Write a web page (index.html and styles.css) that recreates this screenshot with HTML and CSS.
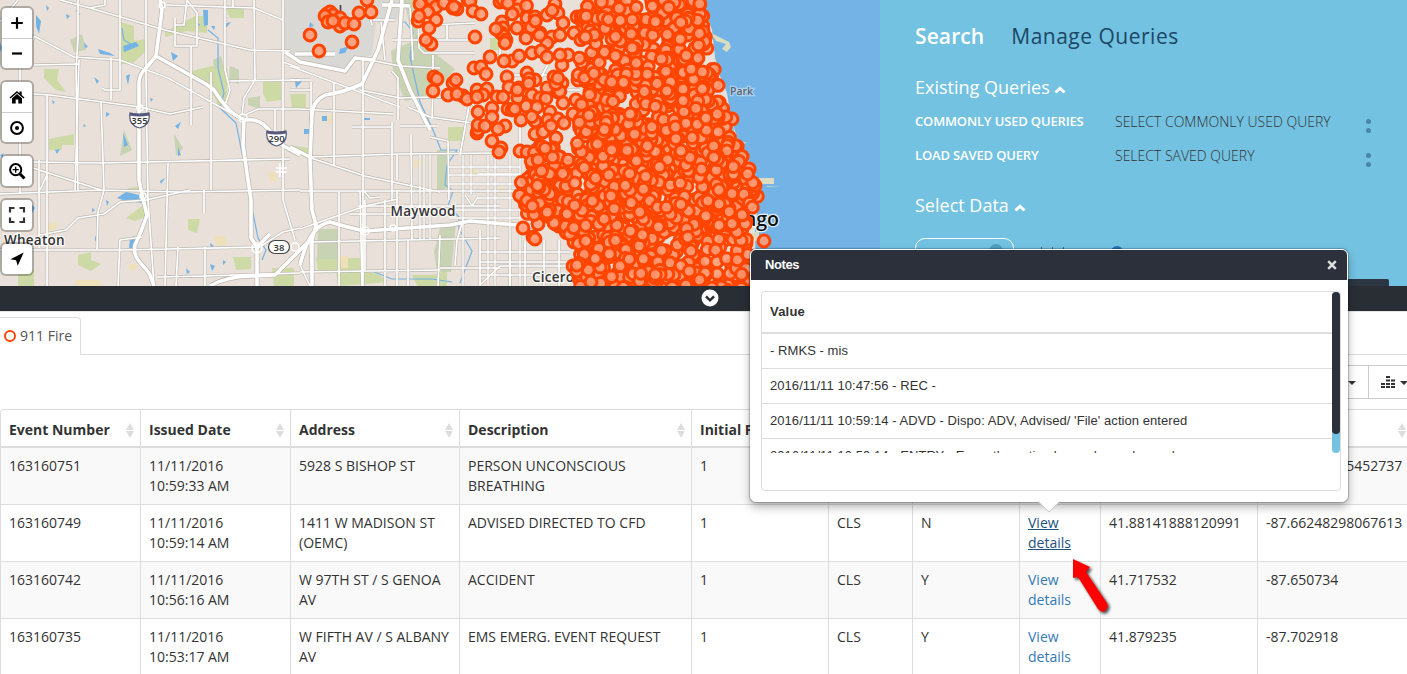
FILE: index.html
```html
<!DOCTYPE html>
<html lang="en">
<head>
<meta charset="utf-8">
<title>911 Fire</title>
<link rel="stylesheet" href="styles.css">
</head>
<body>
<div class="app">
  <div class="top">
    <div class="map">
      <svg class="map-canvas" width="880" height="286" viewBox="0 0 880 286">
        <rect class="land" width="880" height="286"/>
        <path class="airport" d="M283 0H405L395 22 376 22 372 55 356 60 350 70 330 68 292 58 283 50Z"/>
        <g class="park">
          <path d="M121 22l13 4v15l12-2v12l-14 13h-11zM44 69h15l-2 11 9 12-10-2-12-12zM165 32l30-16h12v17l-20-2-22 6zM188 72l24-6 15 2v34l-8 5-12-25zM263 82h18v18l-14 2-4-8zM49 139l25-5v11h-12v5h-13zM126 218l16-12 5 10-12 5zM78 255l13-3v8l10 4-10 7-13-6zM188 219h12l-3 14-9-3zM233 257h18v12l-15 1zM290 94h16v14h-14zM448 127h17v14h-17zM290 145l18 3 3 10-21-6zM18 270h16v16H18zM272 268h22v18h-20zM316 258h44v12h-42zM336 272l20-3 22 5 10 8-50 4zM412 275h20l15-4v15h-30zM120 190l20-4 3 5-20 2zM226 8h18v10h-14zM490 38h16v12h-16z"/>
          <path class="wood" d="M404 0h13v35l20 20 18 14-20 24-30 8-12-30-2-20 22-10zM437 150h12l-2 38-10 4zM440 228l16-6-5 50h-14l-3-20zM318 229h20v30h-21zM70 40l12-6 4 16-12 2zM213 60l8-4 3 12-10 1zM230 66l9 4v14l-10-4zM248 98l12-2v13l-12-4zM124 130l8 20-12 6zM174 134l9 14-7 8z"/>
        </g>
        <path class="sand" d="M46 224l12-2-3 8h-7zM214 236h12v9h-10zM75 280h25v6H75zM269 172h7v10l-7-1zM327 115h7v8h-7zM414 160h9v7h-9zM469 169h7v7h-7zM499 187h5v6h-5zM340 256h8v12h-7zM129 264h7v6h-6z"/>
        <g class="water">
          <path d="M36 15l5 6-2 13-3-8zM98 49l12 4 5 3-15-2zM123 46l13-4 3 4-15 6zM203 10h5v15l-4 1zM211 26h4l-1 4zM171 52l7 4-5 5zM84 42l4 5-3 1zM94 77l5 4-2 3zM123 133l5 12-4 2zM175 126l6-4-3 7zM178 147l3 8-3 1zM130 238l5-2v12h-6zM55 150l5-1-3 5zM160 181l5-3-4 6zM322 116h5v5h-5zM304 129h6v5h-6zM295 82l8-2-7 8zM364 118h6v2h-6zM340 49l9-3-4 7-6 1zM310 22l4 4-5 1zM32 205l3 3-3 5zM117 198l9-6 18 4-3 7-18-3zM106 200l3 2-2 4zM0 42l2 6-2 4zM46 5l3 3-2 3zM66 14l4 2-3 3zM52 100l3 2-2 2zM150 98l3 1-2 3zM196 20l4 5-3 2zM224 24l7-2-5 6zM126 76l4-2-2 11zM210 243l4 3-3 2zM223 260l3 2-3 3zM210 264l5 2-3 5zM186 268l4 4-3 2zM95 236l4 3-4 2zM92 208l3 2-3 2zM106 112l4 2-4 3zM84 124l2 2-3 1zM0 155l4-2-2 5z"/>
          <path class="lake" d="M702 0L712 30 716 66 727 93 731 118 733 135 748 160 760 185 755 230 756 286H880V0Z"/>
        </g>
        <path class="beach" d="M711 33l18 9 2 5-4 5-5-3 4-5-10-3zM714 56l5 12-3-1zM733 124l5 16 9 3-5 1-7-4zM758 178h16v6h-16zM766 186l14 1h-12zM749 235l10-5v10l-8 2z"/>
        <path class="river" d="M400 22l5 0 8 10-3 25 10 45 13 28 8 20 16 0-10 15-2 20 8 6-5 15 11 11 0 12 13 22-6 16-6 16M208 30l10 8 0 30 6 25-4 15 16 15 8 40 8 45 6 30 8 12-4 10M122 28l2 12 10 6M76 10l4 5M372 271l20 8 40 0 20 3"/>
        <defs>
          <g id="minor">
            <path d="M60 0L90 8 105 5V0M90 8L165 30 250 50 290 51M120 0V90L105 90 102 88M47 95V286M78 0V38L76 70 78 190M75 190L79 60M101 101L104 190 98 212 97 249M111 58V100M146 0V76L148 200 154 286M33 40L34 36 74 57 120 60 168 78 240 118M34 65L78 64M33 94L50 95 140 107 170 114 203 107M33 162L100 163 290 159M0 194L100 190 180 192 300 190M0 250L120 250 258 247M33 168L101 190M40 235L66 230 78 218 104 214 120 202 146 200 190 190M168 163L165 286M178 247L176 286M118 286L120 240 142 237M175 18V46H197V13M197 13L187 0M187 0L184 25 175 25M191 46V125M211 72V190M204 190V213M225 0V70L230 90 225 105M254 0L255 80 244 98 242 115M283 0V200L295 240M230 81L300 80M283 62L300 68M167 5L254 8 283 20M233 0V8M205 286V247M157 277L205 276 300 273M255 250L283 232 300 228M39 248V160M47 175L40 190M20 65V194M0 22L18 0M245 115L258 109 300 109M275 109V135"/>
            <path d="M290 80H311M290 90H311M311 82V156M290 66L400 107M363 58V286M334 83V166M392 122V200M300 109L393 114M352 127H392M400 126H437M392 71L398 78V120M360 90L400 98 430 97 467 98 480 112M433 84L432 119M408 107L430 117 480 124M430 137L448 141 449 200M311 158L365 176 440 192M310 157L400 154 500 153M300 191H520M364 191L370 198 380 197M300 229L365 206 398 199M358 206L500 206M350 214H440M411 135L412 240M397 155V180M397 190V286M365 200V270M385 200V286M408 240V286M339 192V286M311 242L500 238M300 272L440 270M440 268L500 268M440 235L438 286M465 195L472 206 478 197M463 220L457 240 455 265M480 230V286M510 240V286M525 240V286M544 240V286M559 240V286M480 252H570M480 262H570M480 275H575M480 285L500 266H575M418 10L419 48 424 53 475 53M392 40L475 40M433 55V70M447 25V40M430 25L475 23M410 8L413 60M373 20H395M381 22L385 60M360 58L400 66 440 68M460 155L470 100M360 191L362 286M312 280L310 240M300 265L310 286M366 0L372 25M500 45V60M550 60L540 80M500 75H560M520 120V160M540 90H580M590 150H640M600 60V110M650 40V90M670 120H720"/>
          </g>
          <g id="street">
            <path d="M420 155V240M424 155V240M430 155V240M463 155V286M471 155V195M488 155V286M495 155V286M510 155V286M520 155V286M449 167H520M449 175H520M449 184H540M478 174H520M478 198H520M449 210H540M449 218H520"/>
          </g>
          <g id="major">
            <path d="M160 0L162 10 156 56M156 56L146 68Q139 74 139 84V180L142 195 147 215Q140 235 135 245C132 260 145 265 150 275L154 286M156 56L206 84 214 90Q230 116 246 120Q262 118 272 134L282 145 300 155"/>
            <path d="M244 118L243 145 248 180 251 200V238L257 247M257 247L270 234M210 286Q225 277 250 276L275 275 292 258 310 240M257 245V286M392 0L378 50 362 84Q345 92 325 95Q312 102 312 115L310 160 312 210 316 225 312 240 312 286M300 265Q310 225 330 222Q350 228 365 231L450 225 470 221 540 227M285 52L300 62 345 71 355 58 372 60M290 147L310 157M295 54H335M402 0L398 60 410 90 430 130M382 5L392 5 410 6"/>
          </g>
        </defs>
        <use href="#street" class="casing street-casing"/>
        <use href="#minor" class="casing minor-casing"/>
        <use href="#major" class="casing major-casing"/>
        <use href="#street" class="road street-road"/>
        <use href="#minor" class="road minor-road"/>
        <use href="#major" class="road major-road"/>
        <g class="interchange"><circle cx="162" cy="5" r="3"/><circle cx="243" cy="118" r="4"/><circle cx="257" cy="248" r="5"/><circle cx="295" cy="247" r="4"/><circle cx="365" cy="231" r="4"/><circle cx="393" cy="228" r="3"/><circle cx="143" cy="196" r="3"/><circle cx="140" cy="108" r="3"/><path d="M276 168h11M276 172h11M280 163v14M283 163v14"/></g>
        <g class="shield">
          <path d="M130 113q9 3 19 0q2 12-9.500 15q-11.500-3-9.500-15zM267 131q9 3 19 0q2 12-9.500 15q-11.500-3-9.500-15z"/>
          <path class="shield-top" d="M130 114q9 2 19 0M267 132q9 2 19 0"/>
          <rect x="268.500" y="240.500" width="21" height="13" rx="6.500"/>
          <text x="139.500" y="124">355</text><text x="276.500" y="142">290</text><text x="279" y="250.500">38</text>
        </g>
        <g class="place">
          <text x="4" y="244.500" textLength="60.500">Wheaton</text>
          <text x="390.500" y="216" textLength="65">Maywood</text>
          <text x="532" y="282" textLength="42">Cicero</text>
          <text class="place-minor" x="730" y="95">Park</text>
          <text class="place-major" x="779" y="226">Chicago</text>
        </g>
        <path class="label-stem" d="M340.500 5v6"/>
        <g class="markers" id="markers"></g>
      </svg>
      <div class="controls">
        <div class="control-group">
          <span class="control"><svg width="18" height="18" viewBox="0 0 18 18"><path class="stroke" d="M9 3.200v11.600M3.200 9h11.600"/></svg></span>
          <span class="control"><svg width="18" height="18" viewBox="0 0 18 18"><path class="stroke" d="M4 8.500h10"/></svg></span>
        </div>
        <div class="control-group">
          <span class="control"><svg width="18" height="18" viewBox="0 0 18 18"><path d="M1.500 9.500L9 3l2.500 2.200V3.500h2.200v3.600l2.800 2.400-.9 1L9 4.900l-6.600 5.600zM4 10.300l5-4.300 5 4.300V15.500h-3.700v-4H7.700v4H4z"/></svg></span>
          <span class="control"><svg width="18" height="18" viewBox="0 0 18 18"><circle class="ring" cx="9" cy="9" r="5.900"/><circle cx="9" cy="9" r="2"/></svg></span>
        </div>
        <div class="control-group">
          <span class="control"><svg width="18" height="18" viewBox="0 0 18 18"><circle class="ring" cx="7.700" cy="7.700" r="5.600"/><path class="thick" d="M12 12l4.500 4.500"/><path class="thin" d="M7.700 4.700v6M4.700 7.700h6"/></svg></span>
        </div>
        <div class="control-group">
          <span class="control"><svg width="18" height="18" viewBox="0 0 18 18"><path class="frame" d="M2 6.500V2h4.500M11.500 2H16v4.500M16 11.500V16h-4.500M6.500 16H2v-4.500"/></svg></span>
        </div>
        <div class="control-group">
          <span class="control"><svg width="18" height="18" viewBox="0 0 18 18"><path d="M15.700 2.500L2.500 9.300l5.600.9 1.600 5.600z"/></svg></span>
        </div>
      </div>
    </div>
    <div class="panel">
      <div class="panel-tabs"><span class="panel-tab active">Search</span><span class="panel-tab">Manage Queries</span></div>
      <div class="section-title">Existing Queries <svg width="12" height="8" viewBox="0 0 12 8"><path d="M1.500 6.500L6 2.200l4.500 4.300"/></svg></div>
      <div class="query-row"><span class="query-label">COMMONLY USED QUERIES</span><span class="query-value">SELECT COMMONLY USED QUERY</span><span class="dots"><i></i><i></i></span></div>
      <div class="query-row"><span class="query-label">LOAD SAVED QUERY</span><span class="query-value">SELECT SAVED QUERY</span><span class="dots"><i></i><i></i></span></div>
      <div class="section-title second">Select Data <svg width="12" height="8" viewBox="0 0 12 8"><path d="M1.500 6.500L6 2.200l4.500 4.300"/></svg></div>
      <div class="data-row"><span class="data-pill"><i></i></span><span class="data-marks"><i></i><i></i><i></i></span><span class="data-dot"></span></div>
      <div class="panel-button"></div>
    </div>
  </div>
  <div class="divider"><svg width="18" height="18" viewBox="0 0 18 18"><circle cx="9" cy="9" r="8.500"/><path d="M5 7.300l4 4 4-4"/></svg></div>
  <div class="tabs"><div class="tab"><i class="tab-ring"></i>911 Fire</div></div>
  <div class="toolbar">
    <div class="tool"><i class="caret"></i></div>
    <div class="tool"><svg width="14" height="14" viewBox="0 0 14 14"><path d="M0 8h4v2H0zM0 11h4v2H0zM5 1h4v2H5zM5 4.500h4v2H5zM5 8h4v2H5zM5 11h4v2H5zM10 4.500h4v2h-4zM10 8h4v2h-4zM10 11h4v2h-4z"/></svg><i class="caret"></i></div>
  </div>
  <table class="events">
    <colgroup><col class="c1"><col class="c2"><col class="c3"><col class="c4"><col class="c5"><col class="c6"><col class="c7"><col class="c8"><col class="c9"><col class="c10"></colgroup>
    <thead><tr>
      <th><div class="head">Event Number<i class="sort"></i></div></th><th><div class="head">Issued Date<i class="sort"></i></div></th><th><div class="head">Address<i class="sort"></i></div></th><th><div class="head">Description<i class="sort"></i></div></th><th><div class="head">Initial Pri<i class="sort"></i></div></th><th></th><th></th><th></th><th></th><th><div class="head"><span></span><i class="sort"></i></div></th>
    </tr></thead>
    <tbody>
      <tr><td>163160751</td><td>11/11/2016 10:59:33 AM</td><td>5928 S BISHOP ST</td><td>PERSON UNCONSCIOUS BREATHING</td><td>1</td><td></td><td></td><td></td><td></td><td>-87.66003125452737</td></tr>
      <tr><td>163160749</td><td>11/11/2016 10:59:14 AM</td><td>1411 W MADISON ST (OEMC)</td><td>ADVISED DIRECTED TO CFD</td><td>1</td><td>CLS</td><td>N</td><td><a class="link hover">View details</a></td><td>41.88141888120991</td><td>-87.66248298067613</td></tr>
      <tr><td>163160742</td><td>11/11/2016 10:56:16 AM</td><td>W 97TH ST / S GENOA AV</td><td>ACCIDENT</td><td>1</td><td>CLS</td><td>Y</td><td><a class="link">View details</a></td><td>41.717532</td><td>-87.650734</td></tr>
      <tr><td>163160735</td><td>11/11/2016 10:53:17 AM</td><td>W FIFTH AV / S ALBANY AV</td><td>EMS EMERG. EVENT REQUEST</td><td>1</td><td>CLS</td><td>Y</td><td><a class="link">View details</a></td><td>41.879235</td><td>-87.702918</td></tr>
    </tbody>
  </table>
  <div class="popover">
    <div class="popover-head"><span>Notes</span><svg width="10" height="10" viewBox="0 0 10 10"><path d="M1.200 1.200l7.600 7.600M8.800 1.200L1.200 8.800"/></svg></div>
    <div class="popover-box">
      <div class="scroller">
        <div class="notes">
          <div class="note note-head">Value</div>
          <div class="note">- RMKS - mis</div>
          <div class="note">2016/11/11 10:47:56 - REC -</div>
          <div class="note">2016/11/11 10:59:14 - ADVD - Dispo: ADV, Advised/ 'File' action entered</div>
          <div class="note">2016/11/11 10:59:14 - ENTRY - Exam the action log and saved posed</div>
        </div>
        <div class="track"><div class="thumb"></div></div>
      </div>
    </div>
    <svg class="tip" width="24" height="12" viewBox="0 0 24 12"><path class="tip-fill" d="M1 0L12 10.500 23 0z"/><path class="tip-line" d="M1 .5L12 11 23 .5"/></svg>
  </div>
  <svg class="pointer" width="52" height="66" viewBox="0 0 52 66"><path d="M8 4L25 12 21 17 42 48Q44 52 40 56Q36 58 33 54L13 22 8 23Z"/></svg>
</div>
<script src="markers.js"></script>
</body>
</html>
```
FILE: styles.css
```css
* { box-sizing: border-box; }
body { margin: 0; font: 14px/20px "Open Sans", sans-serif; color: #333; background: #fff; overflow: hidden; }
.app { position: relative; width: 1407px; height: 674px; overflow: hidden; }
.top { display: flex; height: 286px; }
.map { position: relative; width: 880px; overflow: hidden; }
.map-canvas { display: block; }
.land { fill: #e8e0d9; }
.airport { fill: #dad8d4; }
.park { fill: #cddaa6; }
.wood { fill: #c8d3b4; }
.sand { fill: #eee0b8; }
.water, .lake { fill: #73b3e6; }
.beach { fill: #dcdcc0; }
.river { fill: none; stroke: #73b3e6; stroke-width: 1.2; }
.casing, .road { fill: none; stroke-linejoin: round; }
.casing { stroke: #bdb8b0; }
.road { stroke: #fff; }
.street-casing { stroke-width: 2.6; }
.street-road { stroke-width: 1.4; }
.minor-casing { stroke-width: 2.9; }
.minor-road { stroke-width: 1.7; }
.major-casing { stroke-width: 5; }
.major-road { stroke-width: 3.6; }
.interchange { fill: none; stroke: #fff; stroke-width: 1.5; }
.shield { fill: #fff; stroke: #55597c; stroke-width: 1.2; }
.shield .shield-top { fill: none; stroke-width: 3; }
.shield text { fill: #333; stroke: none; font-size: 9.5px; font-weight: 600; text-anchor: middle; }
.shield rect { stroke: #444; }
.place { fill: #333; stroke: #fff; stroke-opacity: .8; stroke-width: 2.5; paint-order: stroke; font-size: 13.5px; font-weight: 600; }
.place .place-minor { fill: #5c6670; font-size: 10.5px; stroke-opacity: .4; }
.place .place-major { fill: #111; font-size: 19.5px; text-anchor: end; }
.label-stem { stroke: #444; stroke-width: 1.6; }
.markers { fill: #ff9b75; fill-opacity: .88; stroke: #ff4500; stroke-width: 3; }

.controls { position: absolute; left: 2px; top: 8px; display: flex; flex-direction: column; gap: 14px; }
.control-group { width: 30px; background: #fff; border-radius: 4px; box-shadow: 0 0 0 2px rgba(0,0,0,.25); }
.control { display: flex; align-items: center; justify-content: center; height: 30px; }
.control + .control { border-top: 1px solid #ccc; }
.control svg { fill: #000; }
.control .stroke { stroke: #000; stroke-width: 2.2; }
.control .ring { fill: none; stroke: #000; stroke-width: 2; }
.control .thick { stroke: #000; stroke-width: 3; }
.control .thin { stroke: #000; stroke-width: 1.3; }
.control .frame { fill: none; stroke: #333; stroke-width: 2.2; }

.panel { position: relative; width: 527px; padding: 22px 35px 0; background: #73c2e1; color: #fff; overflow: hidden; }
.panel-tabs { display: flex; gap: 27px; height: 30px; font-size: 21px; line-height: 29px; }
.panel-tab { color: #1c4664; letter-spacing: .5px; }
.panel-tab.active { color: #fff; font-weight: 600; letter-spacing: .1px; }
.section-title { margin-top: 22px; height: 28px; font-size: 18px; line-height: 27px; }
.section-title svg { fill: none; stroke: #fff; stroke-width: 3; }
.section-title.second { margin-top: 22px; }
.query-row { display: flex; height: 34px; padding-top: 9px; }
.query-label { width: 200px; font-weight: 600; font-size: 13px; letter-spacing: -.15px; }
.query-value { width: 251px; padding-top: 1px; font-size: 14px; font-weight: 300; color: #333; }
.dots { display: flex; flex-direction: column; gap: 4px; padding-top: 8px; }
.dots i { width: 5px; height: 5px; border-radius: 50%; background: #4686ab; }
.data-row { display: flex; margin-top: 18px; height: 40px; }
.data-pill { display: flex; justify-content: flex-end; width: 99px; height: 34px; padding: 5px 10px; border: 1px solid #fff; border-radius: 10px; }
.data-pill i { width: 14px; height: 14px; border-radius: 50%; background: #4e9fbe; }
.data-marks { display: flex; gap: 10px; width: 97px; padding: 9px 0 0 27px; }
.data-marks i { width: 1px; height: 9px; background: #34677f; }
.data-dot { width: 12px; height: 12px; margin-top: 8px; border-radius: 50%; background: #2c6fb6; }
.panel-button { position: absolute; left: 400px; top: 279px; width: 109px; height: 10px; border-radius: 2px; background: #2b3544; }

.divider { display: flex; height: 26px; padding: 3px 0 0 701px; background: #292e35; border-bottom: 1px solid #e4e4e4; }
.divider svg { fill: #fff; }
.divider path { fill: none; stroke: #292e35; stroke-width: 2.5; }
.tabs { display: flex; height: 43px; padding-top: 5px; border-bottom: 1px solid #ddd; }
.tab { display: flex; align-items: center; gap: 4px; width: 81px; height: 38px; padding: 0 0 2px 4px; border: 1px solid #ddd; border-left: 0; border-bottom: 0; border-radius: 0 4px 0 0; background: #fff; color: #555; white-space: nowrap; }
.tab-ring { width: 12px; height: 12px; border: 2px solid #ff4500; border-radius: 50%; }
.toolbar { display: flex; height: 54px; padding: 10px 0 0 1290px; }
.tool { display: flex; flex: none; align-items: center; justify-content: flex-end; gap: 5px; width: 79px; height: 34px; padding-right: 12px; border: 1px solid #ccc; }
.tool + .tool { width: 50px; margin-left: -1px; justify-content: flex-start; padding: 0 0 0 12px; }
.tool svg { fill: #333; }
.caret { border: 4px solid transparent; border-top-color: #333; border-bottom: 0; margin-top: 2px; }

.events { width: 1412px; table-layout: fixed; border-collapse: separate; border-spacing: 0; border-top: 1px solid #ddd; border-top-left-radius: 4px; }
.c1 { width: 140px; } .c2 { width: 150px; } .c3 { width: 169px; } .c4 { width: 232px; } .c5 { width: 137px; }
.c6 { width: 84px; } .c7 { width: 107px; } .c8 { width: 81px; } .c9 { width: 157px; } .c10 { width: 155px; }
.events th, .events td { padding: 8px; text-align: left; vertical-align: top; border-left: 1px solid #ddd; border-bottom: 1px solid #ddd; }
.events th { height: 38px; padding: 10px 6px 6px 8px; border-bottom-width: 2px; white-space: nowrap; }
.events th:first-child { border-top-left-radius: 4px; }
.events td { height: 57px; }
.events tbody tr:nth-child(odd) td { background: #f9f9f9; }
.head { display: flex; justify-content: space-between; height: 20px; }
.sort { display: flex; flex-direction: column; gap: 1px; padding-top: 3px; }
.sort::before, .sort::after { content: ""; border: 4px solid transparent; }
.sort::before { border-top: 0; border-bottom: 7px solid #ddd; }
.sort::after { border-bottom: 0; border-top: 7px solid #ddd; }
.link { color: #337ab7; }
.link.hover { color: #23527c; text-decoration: underline; }

.popover { position: absolute; left: 750px; top: 249px; width: 598px; height: 253px; border: 1px solid #fff; border-radius: 6px; background: #fff; box-shadow: 0 0 1px 1px rgba(0,0,0,.22), 0 5px 10px rgba(0,0,0,.3); font-family: "Liberation Sans", sans-serif; font-size: 13px; }
.popover-head { display: flex; justify-content: space-between; align-items: center; height: 30px; padding: 0 10px 0 14px; border-radius: 5px 5px 0 0; background: #2b303b; color: #fff; font-weight: bold; letter-spacing: -.4px; }
.popover-head svg { stroke: #ddd; stroke-width: 2.5; }
.popover-box { margin: 11px 6px 0 10px; height: 200px; border: 1px solid #ddd; border-radius: 4px; }
.scroller { display: flex; height: 161px; overflow: hidden; }
.notes { flex: 1; }
.note { height: 35px; padding: 8px 8px 0; border-bottom: 1px solid #ddd; line-height: 18px; white-space: nowrap; letter-spacing: .06px; }
.note-head { height: 42px; padding-top: 11px; border-bottom-width: 2px; font-weight: bold; letter-spacing: .2px; }
.track { width: 8px; height: 161px; border-radius: 4px; background: #73c2e1; }
.thumb { height: 142px; border-radius: 4px; background: #2b303b; }
.tip { position: absolute; left: 286px; top: 251px; }
.tip-fill { fill: #fff; }
.tip-line { fill: none; stroke: #ccc; }
.pointer { position: absolute; left: 1065px; top: 555px; fill: #f00; filter: drop-shadow(2px 2px 1.5px rgba(0,0,0,.7)); }
```
FILE: markers.js
```js
// Incident markers: isolated points first, then the dense city area.
const layer = document.getElementById("markers");
const points = [[367,0],[359,13],[371,12],[352,42],[319,51],[310,35],[327,14],[330,12],[333,15],[325,16],[328,22],[340,18],[340,26],[345,23],[333,21],[354,24],
[423,1],[432,0],[420,4],[436,7],[428,12],[418,21],[419,16],[436,20],[429,28],[431,44],[426,40],[444,3],[453,8],[457,9],[454,7],[468,0],[470,1],[473,11],[481,14],[475,37],[500,2],[503,0],[510,4],[519,4],[502,22],[503,28],[501,33],[504,36],[506,40],[505,43],[496,29],[517,28],[517,10],[527,18],[526,38],[535,17],[540,33],[547,15],[555,4],[558,13],[563,23],[577,17],[574,33],[552,37],[547,43],[532,53],[541,51],[547,57],[568,55],[562,65],[582,63],[560,55],[560,35],[532,28],
[490,57],[512,61],[504,61],[519,56],[474,68],[481,67],[486,74],[434,77],[437,79],[433,91],[453,83],[456,80],[448,95],[463,96],[457,94],[467,99],[477,90],[487,89],[483,95],[477,97],[497,97],[507,77],[509,87],[519,88],[527,73],[535,80],[529,79],[532,95],[540,98],[547,88],[554,77],[562,83],[558,92],[578,80],[478,112],[492,108],[492,117],[503,97],[508,109],[512,110],[526,106],[537,107],[521,120],[535,121],[550,112],[548,120],[558,119],[564,123],[563,103],[576,100],[573,114],[580,120],[477,133],[478,130],[478,125],[485,126],[505,126],[498,129],[492,141],[501,148],[499,152],[520,151],[527,152],[535,134],[543,132],[556,138],[540,146],[523,228],[538,224],[533,237],[535,239],[573,266],[764,241],[732,119],
[700,216],[708,224],[712,212],[717,228],[722,218],[728,226],[733,214],[738,222],[742,229],[704,230],[726,234],[736,235],[743,213],[746,222]];
const city = [[588,0],[702,0],[704,22],[709,50],[716,70],[722,100],[730,125],[737,145],[751,167],[761,186],[754,208],[746,220],[749,250],[750,292],[576,292],[576,245],[563,232],[545,225],[522,210],[518,185],[521,165],[541,145],[558,148],[572,165],[578,135],[582,90],[582,40]];
const fringe = [[505,0],[590,0],[590,140],[510,122],[500,108],[520,80],[545,62],[520,30]];
const inside = (poly, x, y) => {
  let hit = false;
  for (let i = 0, j = poly.length - 1; i < poly.length; j = i++) {
    const [ax, ay] = poly[i], [bx, by] = poly[j];
    if ((ay > y) !== (by > y) && x < (bx - ax) * (y - ay) / (by - ay) + ax) hit = !hit;
  }
  return hit;
};
let seed = 41;
const rand = () => (seed = (seed * 16807) % 2147483647) / 2147483647;
for (let n = 0; n < 1900; n++) {
  const x = 500 + rand() * 265, y = rand() * 292;
  if (inside(city, x, y) || (n % 9 === 0 && inside(fringe, x, y))) points.push([x, y]);
}
for (const [x, y] of points) {
  const c = document.createElementNS("http://www.w3.org/2000/svg", "circle");
  c.setAttribute("cx", x.toFixed(1));
  c.setAttribute("cy", y.toFixed(1));
  c.setAttribute("r", 5.9);
  layer.appendChild(c);
}
```
